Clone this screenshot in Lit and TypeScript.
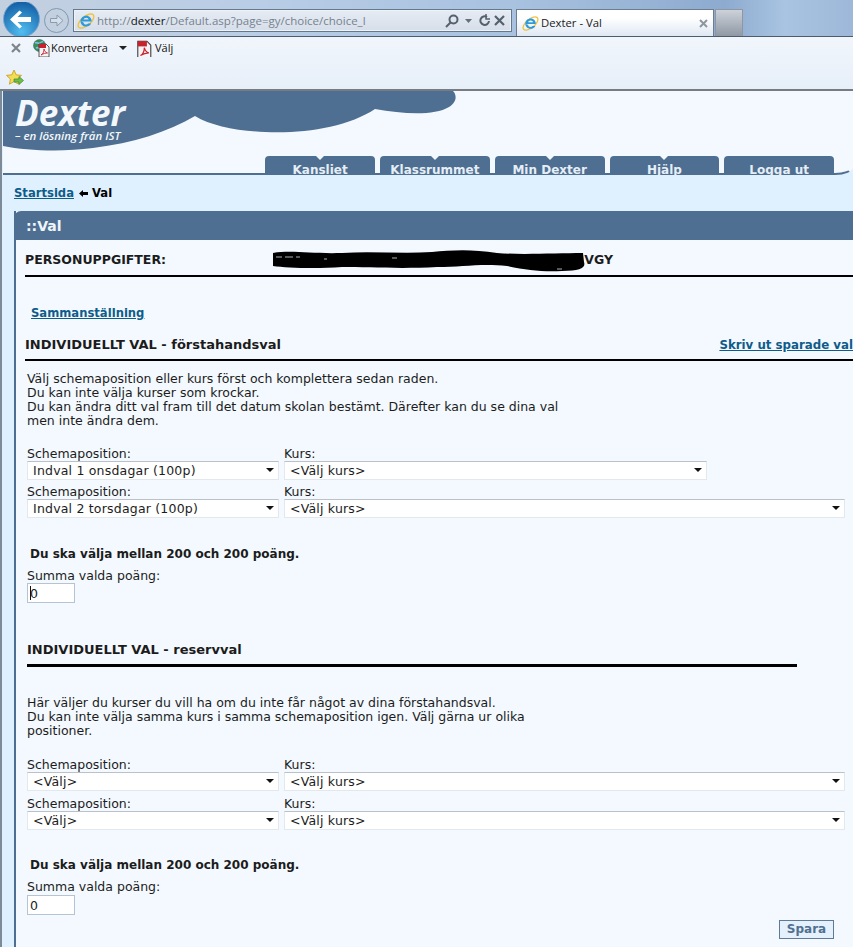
import { LitElement, html, css, svg } from "lit";
import { customElement } from "lit/decorators.js";

const ieIcon = (s: number) => html`<svg width=${s} height=${s} viewBox="0 0 18 18" fill="none">
  <ellipse cx="9" cy="9" rx="9.5" ry="4.5" transform="rotate(-40 9 9)" stroke="#f0c240" stroke-width="1.4"/>
  <path d="M4 9.6h10.600c.2-3.300-2.200-5.800-5.300-5.800C6 3.800 3.500 6.200 3.500 9.300c0 3 2.500 5.300 5.600 5.300 2.300 0 4.200-1.100 5.100-3h-3.100c-.5.700-1.200 1-2 1-1.400 0-2.500-1-2.700-2.400M6.500 7.600c.2-1.100 1.400-1.900 2.700-1.900 1.300 0 2.300.8 2.500 1.900z" fill="#2f9ad8" fill-rule="evenodd"/>
</svg>`;

const pdfPage = svg`<path d="M6 4h7l3 3v10H6z" fill="#f4f4f6" stroke="#333" stroke-width=".8"/>
  <path d="M6 4h7v4H6z" fill="#c8232c"/>
  <path d="M8 15c2-1 3-3 3-6 .5 2 1.500 3.500 3.500 4-2 0-4 .5-6.500 2z" fill="none" stroke="#c8232c" stroke-width=".9"/>`;

const redaction = html`<svg class="scribble" width="316" height="24" viewBox="0 0 316 24">
  <path d="M1 5 C20 2 40 6 70 5 C100 3 130 6 160 4 C180 2 200 1 225 5 C250 7 285 5 311 5 L312 14 C314 20 308 23 290 23 C270 24 255 22 235 18 C210 15 190 19 165 19 C130 21 95 19 70 19 C45 21 15 20 1 18 Z" fill="#000"/>
  <path d="M4 9h6M13 9h8M24 9h4M52 11h3M120 10h5M285 21h5" stroke="#d8dde2" stroke-width="1" opacity=".8"/>
</svg>`;

@customElement("app-root")
export class AppRoot extends LitElement {
  static styles = css`
    :host { display: block; width: 853px; height: 947px; overflow: hidden; background: #f3f9fe; font-family: "DejaVu Sans", Verdana, sans-serif; font-size: 12.5px; color: #1c1c1c; line-height: 14px; }
    * { box-sizing: border-box; }
    a { color: #0f5c8a; font-weight: 700; text-decoration: underline; }

    .chrome { height: 36px; display: flex; align-items: flex-start; background: linear-gradient(90deg, #c3d0e0 0%, #b9cde6 30%, #a8c2e0 60%, #8dabcf 85%, #a9c4e2 92%, #9db8d8 100%); font-family: "Open Sans", "Noto Sans", sans-serif; }
    .back { margin: 2px 0 0 3px; flex: none; display: block; }
    .forward { margin: 8px 0 0 4px; flex: none; display: block; }
    .address { margin: 9px 0 0 4px; width: 439px; height: 23px; flex: none; display: flex; align-items: center; padding: 0 5px 0 3px; border: 1px solid #66788c; background: linear-gradient(#e6ecf4, #d6dee9); box-shadow: inset 0 0 0 1px #eef3f8; }
    .url { margin-left: 2px; color: #76828e; font-size: 11.5px; white-space: nowrap; flex: 1; }
    .url b { color: #111; font-weight: 400; }
    .addr-tools { display: flex; align-items: center; }
    .gap-drop { margin-left: 6px; }
    .gap-a { margin-left: 7px; }
    .gap-b { margin-left: 2px; }
    .tab { margin: 9px 0 0 4px; width: 198px; height: 27px; flex: none; display: flex; align-items: center; padding: 0 5px; border: 1px solid #6d7d8f; border-bottom: 0; background: linear-gradient(#fff 30%, #dfe8f3); font-size: 11.3px; color: #1a1a1a; }
    .tab-title { margin-left: 2px; flex: 1; }
    .new-tab { margin-top: 9px; margin-left: 1px; width: 28px; height: 27px; flex: none; border: 1px solid #8d97a3; border-bottom: 0; background: linear-gradient(#cdd2d9, #8f98a4); }

    .toolbar { height: 55px; border-top: 1px solid #4d5c6b; border-bottom: 2px solid #777c83; background: linear-gradient(#f1f6fc, #e7eff9); font-family: "Open Sans", "Noto Sans", sans-serif; font-size: 11px; color: #111; }
    .tool-row { display: flex; align-items: center; height: 22px; }
    .tool-x { margin-left: 11px; width: 10px; flex: none; display: block; }
    .tool-ic { flex: none; display: block; }
    .tool-ic.convert { margin-left: 12px; }
    .tool-ic.pick { margin: 0 1px 0 9px; }
    .caret { margin-left: 11px; width: 0; height: 0; flex: none; border: 4px solid transparent; border-top-color: #222; border-bottom: 0; }
    .fav { height: 30px; padding: 10px 0 0 6px; }
    .fav svg { display: block; }

    .page { height: 856px; border-left: 2px solid #7d8a98; display: flex; flex-direction: column; padding-left: 1px; background: #dff1fe; }
    .header { position: relative; height: 84px; flex: none; background: #f3f9fe; border-bottom: 2px solid #4e6f91; border-right: 2px solid transparent; border-bottom-right-radius: 18px 8px; display: flex; align-items: flex-end; justify-content: flex-end; }
    .cloud { position: absolute; left: 0; top: 0; }
    .logo { position: absolute; left: 12px; top: 6px; color: #f3f8fc; font-family: "Open Sans", sans-serif; font-style: italic; }
    .logo-main { font-size: 35px; line-height: 32px; font-weight: 700; }
    .logo-sub { font-size: 11.5px; line-height: 13px; font-weight: 600; }
    nav { display: flex; gap: 5px; padding-right: 17px; }
    .nav-tab { position: relative; width: 109.750px; height: 17px; background: #4e6f91; border-radius: 4px 4px 0 0; color: #e6eef6; font-weight: 700; font-size: 12px; text-align: center; line-height: 6px; padding-top: 11px; white-space: nowrap; }
    .nav-tab.arrow::before { content: ""; position: absolute; left: 50%; top: 0; margin-left: -4px; border: 4px solid transparent; border-top-color: #f3f9fe; border-bottom: 0; }

    .crumb { flex: none; height: 36px; padding: 11px 0 0 11px; display: flex; align-items: flex-start; font-size: 11.6px; line-height: 14px; }
    .crumb svg { margin: 4px 4px 0 5px; flex: none; }
    .crumb b { color: #000; }

    .panel { flex: 1; margin-left: 11px; background: #f3f9fe; border-left: 2px solid #4e6f91; }
    .panel-head { height: 29px; margin-left: -2px; background: #4e6f91; border-radius: 7px 0 0 0; color: #f0f5fa; font-size: 14px; font-weight: 700; line-height: 31px; padding-left: 12px; }
    .body { padding-left: 9px; }

    .person { margin-top: 13px; height: 24px; border-bottom: 2px solid #000; display: flex; font-weight: 700; font-size: 12.5px; }
    .person-label { width: 247px; flex: none; }
    .person-value { position: relative; width: 341px; text-align: right; }
    .scribble { position: absolute; left: 0; top: -5px; }
    .summary { margin: 29px 0 0 6px; display: block; font-size: 11.6px; }
    .section { margin-top: 18px; height: 23px; border-bottom: 2px solid #000; display: flex; justify-content: space-between; font-size: 13px; font-weight: 700; white-space: nowrap; }
    .section a { font-size: 11.8px; }
    .intro { margin: 11px 0 0 2px; width: 540px; }
    .intro div { white-space: nowrap; }

    .choices { margin: 18px 0 0 2px; display: grid; grid-template-columns: 252px 561px; column-gap: 5px; row-gap: 4px; }
    .field label { display: block; height: 15px; padding-top: 1px; }
    .sel { position: relative; height: 19px; }
    .sel.short { width: 423px; }
    select { appearance: none; display: block; width: 100%; height: 19px; margin: 0; border: 1px solid #e1e8ee; border-top-color: #b9c2cb; border-radius: 0; background: #fff; padding: 0 0 0 5px; font: 12.500px "DejaVu Sans", Verdana, sans-serif; letter-spacing: .2px; color: #1c1c1c; }
    .sel::after { content: ""; position: absolute; right: 5px; top: 7px; border: 4px solid transparent; border-top-color: #111; border-bottom: 0; pointer-events: none; }

    .need { margin: 29px 0 0 5px; font-weight: 700; font-size: 12px; }
    .need.second { margin-top: 28px; }
    .sum-label { margin: 8px 0 0 2px; }
    .sum { position: relative; margin: 0 0 0 2px; width: 48px; height: 20px; }
    .sum.second { margin-top: 1px; }
    .sum input { display: block; width: 100%; height: 100%; border: 1px solid #b5c4d2; background: #fff; padding: 0 0 0 2px; font: 12.500px "DejaVu Sans", Verdana, sans-serif; color: #1c1c1c; border-radius: 0; }
    .sum.cursor::after { content: ""; position: absolute; left: 3px; top: 3px; width: 1px; height: 14px; background: #111; }
    .section2 { margin: 40px 0 0 2px; width: 770px; height: 24px; border-bottom: 3px solid #000; font-size: 13px; font-weight: 700; }
    .intro.reserve { margin-top: 29px; }
    .choices.reserve { margin-top: 19px; row-gap: 5px; }
    .actions { display: flex; justify-content: flex-end; margin-top: 5px; padding-right: 19px; }
    button { width: 55px; height: 19px; border: 1px solid #5d7a96; background: #e4f1fc; color: #51708f; font: 700 12px/15px "DejaVu Sans", Verdana, sans-serif; padding: 0; border-radius: 0; }
  `;

  private field(label: string, value: string, short = false) {
    return html`<div class="field">
      <label>${label}</label>
      <div class="sel ${short ? "short" : ""}"><select aria-label=${label}><option>${value}</option></select></div>
    </div>`;
  }

  private browserChrome() {
    return html`<div class="chrome">
      <svg class="back" width="37" height="34" viewBox="0 0 37 34">
        <defs>
          <radialGradient id="bk" cx=".5" cy=".85" r=".85"><stop offset="0" stop-color="#52bdf0"/><stop offset="1" stop-color="#125da3"/></radialGradient>
        </defs>
        <circle cx="18.500" cy="17" r="18" fill="url(#bk)" stroke="#7ba5cc"/>
        <path d="M7 17.500 16.500 8.500 19 10.500 14.500 15H28v5H14.500l4.500 4.500-2.500 2z" fill="#fff"/>
      </svg>
      <svg class="forward" width="25" height="25" viewBox="0 0 25 25">
        <circle cx="12.500" cy="12.500" r="12" fill="#c2d0e0" stroke="#8298ae"/>
        <path d="M19 12.500 13 7v3.500H6.500v4H13V18z" fill="#d3dfec" stroke="#8b9bab" stroke-width="1"/>
      </svg>
      <div class="address">
        ${ieIcon(18)}
        <span class="url">http://<b>dexter</b>/Default.asp?page=gy/choice/choice_l</span>
        <span class="addr-tools">
          <svg width="14" height="14" viewBox="0 0 14 14" fill="none" stroke="#55616d" stroke-width="2"><circle cx="8.500" cy="5.500" r="4"/><path d="M5.500 8.500 1 13"/></svg>
          <svg class="gap-drop" width="7" height="4" viewBox="0 0 7 4"><path d="M0 0h7L3.500 4z" fill="#666f78"/></svg>
          <svg class="gap-a" width="12" height="13" viewBox="0 0 12 13" fill="none" stroke="#55616d" stroke-width="2"><path d="M10 7a4.300 4.300 0 1 1-2-4"/><path d="M7 0v5h4" stroke-width="1.500"/></svg>
          <svg class="gap-b" width="13" height="13" viewBox="0 0 13 13" stroke="#55616d" stroke-width="2.200"><path d="M2 2l9 9M11 2l-9 9"/></svg>
        </span>
      </div>
      <div class="tab">
        ${ieIcon(17)}
        <span class="tab-title">Dexter - Val</span>
        <svg width="9" height="9" viewBox="0 0 9 9" stroke="#8e979f" stroke-width="2"><path d="M1 1l7 7M8 1 1 8"/></svg>
      </div>
      <div class="new-tab"></div>
    </div>`;
  }

  private browserToolbar() {
    return html`<div class="toolbar">
      <div class="tool-row">
        <svg class="tool-x" width="10" height="10" viewBox="0 0 10 10" stroke="#7d858c" stroke-width="2.200"><path d="M1 1l8 8M9 1 1 9"/></svg>
        <svg class="tool-ic convert" width="18" height="18" viewBox="0 0 18 18">
          <circle cx="6.500" cy="6.500" r="6" fill="#3d8f5a" stroke="#3a6a70" stroke-width=".6"/>
          <path d="M2 4c2-1 3 1 5 0s2-2 3-1M3 9c2-1 3 0 4 2" stroke="#7ec3e6" stroke-width="1.500" fill="none"/>
          <g transform="translate(0 1)">${pdfPage}</g>
        </svg>
        <span>Konvertera</span>
        <span class="caret"></span>
        <svg class="tool-ic pick" width="18" height="18" viewBox="0 0 18 18"><g transform="translate(-6 -3) scale(1.300)">${pdfPage}</g></svg>
        <span>Välj</span>
      </div>
      <div class="fav">
        <svg width="18" height="17" viewBox="0 0 18 17">
          <path d="M8 1l2.200 4.800 5.300.6-3.900 3.600 1 5.200L8 12.600 3.400 15.200l1-5.200L.5 6.400l5.300-.6z" fill="#f4dc55" stroke="#c9a125" stroke-width=".9"/>
          <path d="M8 10h5V7.500l4.500 4-4.500 4V13H8z" fill="#6cc04a" stroke="#3c8a2c" stroke-width=".7"/>
        </svg>
      </div>
    </div>`;
  }

  private pageHeader() {
    return html`<div class="header">
      <svg class="cloud" width="460" height="62" viewBox="0 0 460 62">
        <path d="M0 0H450 C454 4 454 11 446 16 C431 25 400 23 372 18 C345 36 300 43 262 41 C235 40 208 35 192 25 C165 41 130 52 90 57 C60 61 25 60 0 55 Z" fill="#4e6f91"/>
      </svg>
      <div class="logo">
        <div class="logo-main">Dexter</div>
        <div class="logo-sub">– en lösning från IST</div>
      </div>
      <nav>
        ${["Kansliet", "Klassrummet", "Min Dexter", "Hjälp"].map((t) => html`<div class="nav-tab arrow">${t}</div>`)}
        <div class="nav-tab">Logga ut</div>
      </nav>
    </div>`;
  }

  render() {
    return html`
      ${this.browserChrome()}
      ${this.browserToolbar()}
      <div class="page">
        ${this.pageHeader()}
        <div class="crumb">
          <a href="#">Startsida</a>
          <svg width="9" height="7" viewBox="0 0 9 7"><path d="M0 3.500 4 0v2h5v3H4v2z" fill="#000"/></svg>
          <b>Val</b>
        </div>
        <div class="panel">
          <div class="panel-head">::Val</div>
          <div class="body">
            <div class="person">
              <span class="person-label">PERSONUPPGIFTER:</span>
              <span class="person-value">${redaction}VGY</span>
            </div>
            <a class="summary" href="#">Sammanställning</a>
            <div class="section"><span>INDIVIDUELLT VAL - förstahandsval</span><a href="#">Skriv ut sparade val</a></div>
            <div class="intro">
              <div>Välj schemaposition eller kurs först och komplettera sedan raden.</div>
              <div>Du kan inte välja kurser som krockar.</div>
              <div>Du kan ändra ditt val fram till det datum skolan bestämt. Därefter kan du se dina val</div>
              <div>men inte ändra dem.</div>
            </div>
            <div class="choices">
              ${this.field("Schemaposition:", "Indval 1 onsdagar (100p)")}
              ${this.field("Kurs:", "<Välj kurs>", true)}
              ${this.field("Schemaposition:", "Indval 2 torsdagar (100p)")}
              ${this.field("Kurs:", "<Välj kurs>")}
            </div>
            <div class="need">Du ska välja mellan 200 och 200 poäng.</div>
            <div class="sum-label">Summa valda poäng:</div>
            <div class="sum cursor"><input aria-label="Summa valda poäng" .value=${"0"} /></div>
            <div class="section2">INDIVIDUELLT VAL - reservval</div>
            <div class="intro reserve">
              <div>Här väljer du kurser du vill ha om du inte får något av dina förstahandsval.</div>
              <div>Du kan inte välja samma kurs i samma schemaposition igen. Välj gärna ur olika</div>
              <div>positioner.</div>
            </div>
            <div class="choices reserve">
              ${this.field("Schemaposition:", "<Välj>")}
              ${this.field("Kurs:", "<Välj kurs>")}
              ${this.field("Schemaposition:", "<Välj>")}
              ${this.field("Kurs:", "<Välj kurs>")}
            </div>
            <div class="need second">Du ska välja mellan 200 och 200 poäng.</div>
            <div class="sum-label">Summa valda poäng:</div>
            <div class="sum second"><input aria-label="Summa valda poäng" .value=${"0"} /></div>
            <div class="actions"><button>Spara</button></div>
          </div>
        </div>
      </div>
    `;
  }
}
